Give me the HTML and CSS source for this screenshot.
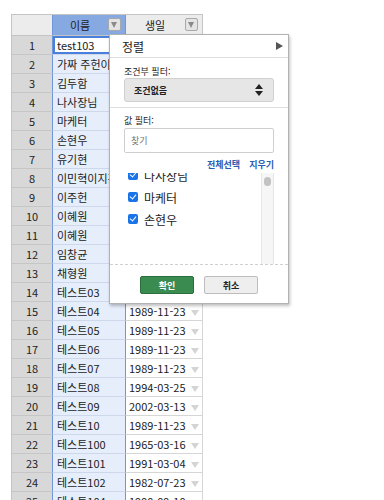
FILE: index.html
```html
<!DOCTYPE html>
<html lang="ko">
<head>
    <meta charset="UTF-8">
    <meta name="viewport" content="width=device-width, initial-scale=1.0">
    <title>시트 필터</title>
    <link rel="stylesheet" href="styles.css">
</head>
<body>
    <div class="sheet">
        <table class="grid">
            <colgroup>
                <col class="c-num">
                <col class="c-name">
                <col class="c-date">
            </colgroup>
            <thead>
                <tr>
                    <th class="corner"></th>
                    <th class="head selected"><span class="head-label">이름</span><i class="filter-btn"></i></th>
                    <th class="head"><span class="head-label">생일</span><i class="filter-btn"></i></th>
                </tr>
            </thead>
            <tbody>
                <tr><td class="num">1</td><td class="name active">test103</td><td class="date">1989-11-23<i class="drop"></i></td></tr>
                <tr><td class="num">2</td><td class="name">가짜 주헌이</td><td class="date">1989-11-23<i class="drop"></i></td></tr>
                <tr><td class="num">3</td><td class="name">김두함</td><td class="date">1989-11-23<i class="drop"></i></td></tr>
                <tr><td class="num">4</td><td class="name">나사장님</td><td class="date">1989-11-23<i class="drop"></i></td></tr>
                <tr><td class="num">5</td><td class="name">마케터</td><td class="date">1989-11-23<i class="drop"></i></td></tr>
                <tr><td class="num">6</td><td class="name">손현우</td><td class="date">1989-11-23<i class="drop"></i></td></tr>
                <tr><td class="num">7</td><td class="name">유기현</td><td class="date">1989-11-23<i class="drop"></i></td></tr>
                <tr><td class="num">8</td><td class="name">이민혁이지훈</td><td class="date">1989-11-23<i class="drop"></i></td></tr>
                <tr><td class="num">9</td><td class="name">이주헌</td><td class="date">1989-11-23<i class="drop"></i></td></tr>
                <tr><td class="num">10</td><td class="name">이혜원</td><td class="date">1989-11-23<i class="drop"></i></td></tr>
                <tr><td class="num">11</td><td class="name">이혜원</td><td class="date">1989-11-23<i class="drop"></i></td></tr>
                <tr><td class="num">12</td><td class="name">임창균</td><td class="date">1989-11-23<i class="drop"></i></td></tr>
                <tr><td class="num">13</td><td class="name">채형원</td><td class="date">1989-11-23<i class="drop"></i></td></tr>
                <tr><td class="num">14</td><td class="name">테스트03</td><td class="date">1989-11-23<i class="drop"></i></td></tr>
                <tr><td class="num">15</td><td class="name">테스트04</td><td class="date">1989-11-23<i class="drop"></i></td></tr>
                <tr><td class="num">16</td><td class="name">테스트05</td><td class="date">1989-11-23<i class="drop"></i></td></tr>
                <tr><td class="num">17</td><td class="name">테스트06</td><td class="date">1989-11-23<i class="drop"></i></td></tr>
                <tr><td class="num">18</td><td class="name">테스트07</td><td class="date">1989-11-23<i class="drop"></i></td></tr>
                <tr><td class="num">19</td><td class="name">테스트08</td><td class="date">1994-03-25<i class="drop"></i></td></tr>
                <tr><td class="num">20</td><td class="name">테스트09</td><td class="date">2002-03-13<i class="drop"></i></td></tr>
                <tr><td class="num">21</td><td class="name">테스트10</td><td class="date">1989-11-23<i class="drop"></i></td></tr>
                <tr><td class="num">22</td><td class="name">테스트100</td><td class="date">1965-03-16<i class="drop"></i></td></tr>
                <tr><td class="num">23</td><td class="name">테스트101</td><td class="date">1991-03-04<i class="drop"></i></td></tr>
                <tr><td class="num">24</td><td class="name">테스트102</td><td class="date">1982-07-23<i class="drop"></i></td></tr>
                <tr><td class="num">25</td><td class="name">테스트104</td><td class="date">1990-09-10<i class="drop"></i></td></tr>
            </tbody>
        </table>

        <div class="filter-menu">
            <div class="menu-sort">
                <span>정렬</span>
                <i class="sort-arrow"></i>
            </div>
            <div class="menu-section cond">
                <div class="menu-label">조건부 필터:</div>
                <div class="select-box">
                    <span>조건없음</span>
                    <svg class="updown" width="8" height="12" viewBox="0 0 8 12"><path d="M4 0L8 5H0Z M0 7H8L4 12Z" fill="#222"/></svg>
                </div>
            </div>
            <div class="menu-section values">
                <div class="menu-label">값 필터:</div>
                <input class="search-input" type="text" placeholder="찾기">
                <div class="value-links">
                    <a href="#">전체선택</a>
                    <a href="#">지우기</a>
                </div>
                <div class="value-list">
                    <ul class="value-items">
                        <li><span class="check"></span>나사장님</li>
                        <li><span class="check"></span>마케터</li>
                        <li><span class="check"></span>손현우</li>
                    </ul>
                    <div class="scroll-track"><span class="scroll-thumb"></span></div>
                </div>
            </div>
            <div class="menu-footer">
                <button class="btn-ok">확인</button>
                <button class="btn-cancel">취소</button>
            </div>
        </div>
    </div>
</body>
</html>
```

FILE: styles.css
```css
* {
    margin: 0;
    padding: 0;
    box-sizing: border-box;
}
body {
    background: #fff;
    font-family: "Noto Sans CJK KR", "Noto Sans", sans-serif;
    color: #222;
}
.sheet {
    position: relative;
    padding: 14px 0 0 11px;
    height: 500px;
    overflow: hidden;
}

/* grid */
.grid {
    border-collapse: separate;
    border-spacing: 0;
    table-layout: fixed;
    width: 191px;
    border-left: 1px solid #c4c4c4;
    border-top: 1px solid #c4c4c4;
    font-size: 11px;
}
.c-num { width: 40px; }
.c-name { width: 74px; }
.c-date { width: 77px; }
.grid th {
    height: 21px;
    background: #ececec;
    border-bottom: 1px solid #c4c4c4;
    border-right: 1px solid #c4c4c4;
    font-weight: normal;
    font-size: 11px;
    text-align: left;
    position: relative;
}
.grid th.corner {
    border-right: none;
}
.grid th.selected {
    background: #86a9e2;
    border-left: 1px solid #6f96d8;
    border-right: 1px solid #6f96d8;
}
.head-label {
    display: block;
    text-align: center;
    padding-right: 18px;
}
.filter-btn {
    position: absolute;
    right: 4px;
    top: 3px;
    width: 13px;
    height: 13px;
    background: #e4e4e4;
    border: 1px solid #a9a9a9;
    border-radius: 2px;
}
.filter-btn::after {
    content: "";
    position: absolute;
    left: 2px;
    top: 3px;
    border-left: 3.5px solid transparent;
    border-right: 3.5px solid transparent;
    border-top: 6px solid #8a8a8a;
}
.grid td {
    height: 19px;
    line-height: 18px;
    border-bottom: 1px solid #d6d6d6;
    white-space: nowrap;
    overflow: hidden;
}
.grid td.num {
    background: #d8d8d8;
    border-bottom-color: #c6c6c6;
    text-align: center;
    font-size: 11px;
}
.grid td.name {
    background: #e6eefb;
    border-left: 1px solid #6f96d8;
    border-right: 1px solid #6f96d8;
    border-bottom-color: #cdd8ea;
    padding-left: 4px;
}
.grid td.name.active {
    background: #fff;
    box-shadow: inset 0 0 0 2px #4a80dc;
}
.grid td.date {
    border-right: 1px solid #d6d6d6;
    padding-left: 3px;
}
.drop {
    display: inline-block;
    margin-left: 5px;
    vertical-align: middle;
    border-left: 4px solid transparent;
    border-right: 4px solid transparent;
    border-top: 6px solid #d4d4d4;
}

/* filter popup */
.filter-menu {
    position: absolute;
    left: 109px;
    top: 34px;
    width: 180px;
    height: 270px;
    background: #fff;
    border: 1px solid #b2b2b2;
    box-shadow: 1px 2px 3px rgba(0, 0, 0, 0.25);
    display: flex;
    flex-direction: column;
}
.menu-sort {
    display: flex;
    align-items: center;
    justify-content: space-between;
    height: 23px;
    padding: 0 5px 0 12px;
    font-size: 12px;
    border-bottom: 1px solid #dedede;
}
.sort-arrow {
    border-top: 4.5px solid transparent;
    border-bottom: 4.5px solid transparent;
    border-left: 7px solid #555;
}
.menu-section {
    padding: 0 14px;
}
.menu-section.cond {
    padding-top: 7px;
    padding-bottom: 5px;
    border-bottom: 1px solid #dedede;
}
.menu-label {
    font-size: 9px;
    line-height: 13px;
}
.select-box {
    display: flex;
    align-items: center;
    justify-content: space-between;
    height: 24px;
    padding: 0 10px 0 9px;
    background: #e6e6e6;
    border: 1px solid #d0d0d0;
    border-radius: 3px;
    font-size: 9px;
    font-weight: bold;
}
.menu-section.values {
    padding-top: 6px;
    padding-right: 14px;
    position: relative;
}
.search-input {
    display: block;
    width: 100%;
    height: 25px;
    margin-top: 1px;
    padding: 0 6px;
    border: 1px solid #cfcfcf;
    border-radius: 2px;
    font-family: inherit;
    font-size: 9px;
}
.search-input::placeholder {
    color: #777;
}
.value-links {
    display: flex;
    justify-content: flex-end;
    gap: 9px;
    height: 17px;
    line-height: 17px;
    margin-top: 3px;
}
.value-links a {
    color: #2a5cb3;
    text-decoration: none;
    font-size: 9px;
    font-weight: bold;
}
.value-list {
    position: relative;
    height: 92px;
    overflow: hidden;
    border-bottom: 1px dashed #d0d0d0;
    margin-left: -14px;
    margin-right: -14px;
    padding-left: 18px;
}
.value-items {
    list-style: none;
    margin-top: -9px;
}
.value-items li {
    display: flex;
    align-items: center;
    height: 22px;
    font-size: 12px;
}
.check {
    position: relative;
    width: 10px;
    height: 10px;
    margin-right: 6px;
    background: #1a73e8;
    border-radius: 2px;
}
.check::after {
    content: "";
    position: absolute;
    left: 3px;
    top: 1px;
    width: 3px;
    height: 5px;
    border-right: 1.5px solid #fff;
    border-bottom: 1.5px solid #fff;
    transform: rotate(40deg);
}
.scroll-track {
    position: absolute;
    right: 14px;
    top: 0;
    bottom: 0;
    width: 13px;
    background: #f6f6f6;
    border-left: 1px solid #e6e6e6;
    border-right: 1px solid #e6e6e6;
}
.scroll-thumb {
    position: absolute;
    left: 2px;
    top: 4px;
    width: 7px;
    height: 9px;
    background: #c2c2c2;
    border-radius: 4px;
}
.menu-footer {
    flex: 1;
    display: flex;
    justify-content: center;
    align-items: center;
    gap: 10px;
    padding-top: 2px;
}
.menu-footer button {
    width: 54px;
    height: 18px;
    border-radius: 2px;
    font-family: inherit;
    font-size: 9px;
    font-weight: bold;
}
.btn-ok {
    background: #3a8b50;
    border: 1px solid #2c6e3d;
    color: #fff;
}
.btn-cancel {
    background: #eeeeee;
    border: 1px solid #bdbdbd;
    color: #222;
}
```
